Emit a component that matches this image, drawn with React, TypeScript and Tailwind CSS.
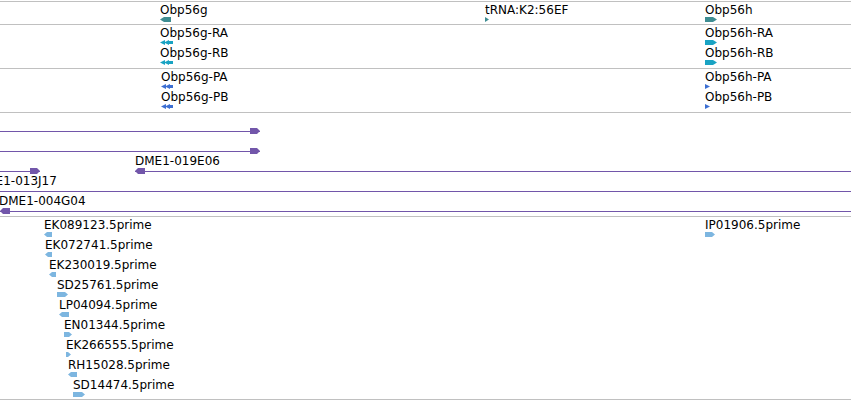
import React from 'react';

type Dir = 'l' | 'r';
type Shape = 'gene' | 'tx' | 'est' | 'tiny';

interface Feature {
  x: number;
  row: number;
  label?: string;
  w: number;
  dir: Dir;
  shape: Shape;
  color: string;
}

const TEAL = '#3e8d92';
const CYAN = '#19a3c3';
const BLUE = '#3d6fd2';
const EST = '#7db6e0';
const PURPLE = '#7256aa';

// polygon for a feature glyph, 5px tall
const Glyph: React.FC<{ w: number; dir: Dir; shape: Shape; color: string }> = ({ w, dir, shape, color }) => {
  let shapes: React.ReactNode;
  if (shape === 'tx') {
    // double chevron
    const pts =
      dir === 'l'
        ? ['0,2.5 5,0 5,5', '4,2.5 9,0 9,5']
        : [`${w},2.5 ${w - 5},0 ${w - 5},5`, `${w - 4},2.5 ${w - 9},0 ${w - 9},5`];
    const tail = dir === 'l' ? <rect x={8} y={1} width={w - 8} height={3} fill={color} /> : <rect x={0} y={1} width={w - 8} height={3} fill={color} />;
    shapes = (
      <>
        {tail}
        {pts.map((p, i) => (
          <polygon key={i} points={p} fill={color} />
        ))}
      </>
    );
  } else if (shape === 'tiny') {
    shapes = <polygon points={dir === 'r' ? `0,0 ${w},2.5 0,5` : `${w},0 0,2.5 ${w},5`} fill={color} />;
  } else {
    const p = shape === 'gene' ? 4 : 3;
    const pts = dir === 'l' ? `0,2.5 ${p},0 ${w},0 ${w},5 ${p},5` : `0,0 ${w - p},0 ${w},2.5 ${w - p},5 0,5`;
    shapes = <polygon points={pts} fill={color} />;
  }
  return (
    <svg width={w} height={5} viewBox={`0 0 ${w} 5`} className="block">
      {shapes}
    </svg>
  );
};

const FeatureItem: React.FC<{ f: Feature }> = ({ f }) => (
  <>
    {f.label && (
      <div className="absolute whitespace-nowrap text-[12px] leading-[14px] text-black" style={{ left: f.x, top: f.row * 20 + 1 }}>
        {f.label}
      </div>
    )}
    <div className="absolute" style={{ left: f.x, top: f.row * 20 + 15 }}>
      <Glyph w={f.w} dir={f.dir} shape={f.shape} color={f.color} />
    </div>
  </>
);

interface Span {
  row: number;
  from: number;
  to: number;
  arrow?: Dir;
  label?: string;
  labelX?: number;
}

const SpanItem: React.FC<{ s: Span }> = ({ s }) => (
  <>
    {s.label && (
      <div className="absolute whitespace-nowrap text-[12px] leading-[14px] text-black" style={{ left: s.labelX ?? s.from, top: s.row * 20 + 1 }}>
        {s.label}
      </div>
    )}
    <div className="absolute h-px" style={{ left: s.from, width: s.to - s.from, top: s.row * 20 + 18, backgroundColor: PURPLE }} />
    {s.arrow === 'r' && (
      <svg className="absolute" width={10} height={6} style={{ left: s.to - 10, top: s.row * 20 + 15 }}>
        <polygon points="0,0 7,0 10,3 7,6 0,6" fill={PURPLE} />
      </svg>
    )}
    {s.arrow === 'l' && (
      <svg className="absolute" width={10} height={6} style={{ left: s.from, top: s.row * 20 + 15 }}>
        <polygon points="0,3 3,0 10,0 10,6 3,6" fill={PURPLE} />
      </svg>
    )}
  </>
);

const genes: Feature[] = [
  { x: 160, row: 0, label: 'Obp56g', w: 11, dir: 'l', shape: 'gene', color: TEAL },
  { x: 485, row: 0, label: 'tRNA:K2:56EF', w: 4, dir: 'r', shape: 'tiny', color: TEAL },
  { x: 705, row: 0, label: 'Obp56h', w: 12, dir: 'r', shape: 'gene', color: TEAL },
];

const transcripts: Feature[] = [
  { x: 160, row: 0, label: 'Obp56g-RA', w: 13, dir: 'l', shape: 'tx', color: CYAN },
  { x: 160, row: 1, label: 'Obp56g-RB', w: 13, dir: 'l', shape: 'tx', color: CYAN },
  { x: 705, row: 0, label: 'Obp56h-RA', w: 12, dir: 'r', shape: 'gene', color: CYAN },
  { x: 705, row: 1, label: 'Obp56h-RB', w: 12, dir: 'r', shape: 'gene', color: CYAN },
];

const proteins: Feature[] = [
  { x: 161, row: 0, label: 'Obp56g-PA', w: 12, dir: 'l', shape: 'tx', color: BLUE },
  { x: 161, row: 1, label: 'Obp56g-PB', w: 12, dir: 'l', shape: 'tx', color: BLUE },
  { x: 705, row: 0, label: 'Obp56h-PA', w: 5, dir: 'r', shape: 'tiny', color: BLUE },
  { x: 705, row: 1, label: 'Obp56h-PB', w: 5, dir: 'r', shape: 'tiny', color: BLUE },
];

const clones: Span[] = [
  { row: 0, from: 0, to: 260, arrow: 'r' },
  { row: 1, from: 0, to: 260, arrow: 'r' },
  { row: 2, from: 0, to: 40, arrow: 'r' },
  { row: 2, from: 135, to: 851, arrow: 'l', label: 'DME1-019E06' },
  { row: 3, from: 0, to: 851, label: 'DME1-013J17', labelX: -24 },
  { row: 4, from: 0, to: 851, arrow: 'l', label: 'DME1-004G04', labelX: -1 },
];

const ests: Feature[] = [
  { x: 44, row: 0, label: 'EK089123.5prime', w: 8, dir: 'l', shape: 'est', color: EST },
  { x: 45, row: 1, label: 'EK072741.5prime', w: 7, dir: 'l', shape: 'est', color: EST },
  { x: 49, row: 2, label: 'EK230019.5prime', w: 7, dir: 'l', shape: 'est', color: EST },
  { x: 57, row: 3, label: 'SD25761.5prime', w: 11, dir: 'r', shape: 'est', color: EST },
  { x: 59, row: 4, label: 'LP04094.5prime', w: 10, dir: 'l', shape: 'est', color: EST },
  { x: 64, row: 5, label: 'EN01344.5prime', w: 8, dir: 'r', shape: 'est', color: EST },
  { x: 66, row: 6, label: 'EK266555.5prime', w: 5, dir: 'r', shape: 'est', color: EST },
  { x: 68, row: 7, label: 'RH15028.5prime', w: 9, dir: 'l', shape: 'est', color: EST },
  { x: 73, row: 8, label: 'SD14474.5prime', w: 12, dir: 'r', shape: 'est', color: EST },
  { x: 705, row: 0, label: 'IP01906.5prime', w: 10, dir: 'r', shape: 'est', color: EST },
];

const Track: React.FC<{ className: string; children: React.ReactNode }> = ({ className, children }) => (
  <div className={`relative overflow-hidden border-b border-[#c0c0c0] ${className}`}>{children}</div>
);

export default function App() {
  return (
    <div className="w-[851px] h-[400px] overflow-hidden bg-white pt-px font-['DejaVu_Sans',sans-serif]">
      <div className="border-t border-[#c0c0c0]">
        <Track className="h-[23px]">
          {genes.map((f, i) => (
            <FeatureItem key={i} f={f} />
          ))}
        </Track>
        <Track className="h-[44px]">
          {transcripts.map((f, i) => (
            <FeatureItem key={i} f={f} />
          ))}
        </Track>
        <Track className="h-[44px]">
          {proteins.map((f, i) => (
            <FeatureItem key={i} f={f} />
          ))}
        </Track>
        <Track className="h-[104px]">
          {clones.map((s, i) => (
            <SpanItem key={i} s={s} />
          ))}
        </Track>
        <Track className="h-[183px]">
          {ests.map((f, i) => (
            <FeatureItem key={i} f={f} />
          ))}
        </Track>
      </div>
    </div>
  );
}
